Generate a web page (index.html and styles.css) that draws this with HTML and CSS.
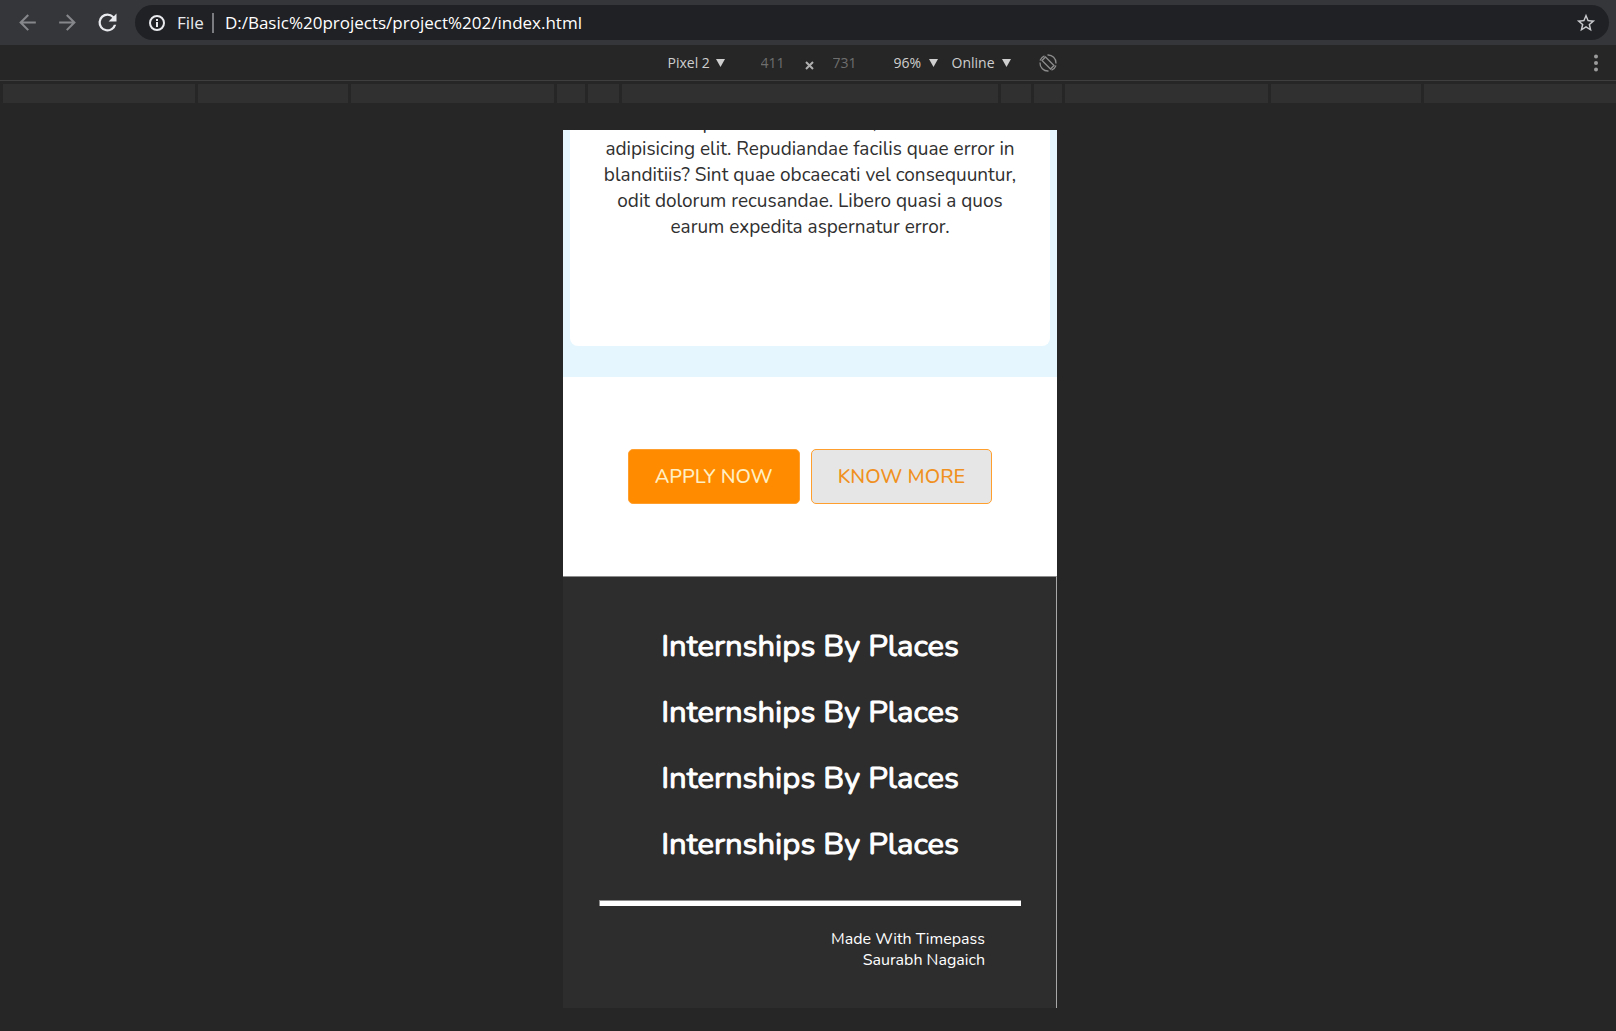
FILE: index.html
```html
<!DOCTYPE html>
<html lang="en">
<head>
<meta charset="utf-8">
<meta name="viewport" content="width=device-width, initial-scale=1">
<title>project 2</title>
<link rel="stylesheet" href="styles.css">
</head>
<body>
<header class="browser-bar">
  <nav class="nav-buttons" aria-label="Browser navigation">
    <button class="icon-button dim" type="button" aria-label="Back"><svg viewBox="0 0 24 24" width="25" height="25"><path fill="currentColor" d="M20 11H7.8l5.6-5.6L12 4l-8 8 8 8 1.4-1.4L7.8 13H20z"/></svg></button>
    <button class="icon-button dim" type="button" aria-label="Forward"><svg viewBox="0 0 24 24" width="25" height="25"><path fill="currentColor" d="M12 4l-1.4 1.4 5.6 5.6H4v2h12.200l-5.600 5.600L12 20l8-8z"/></svg></button>
    <button class="icon-button" type="button" aria-label="Reload"><svg viewBox="0 0 24 24" width="27" height="27"><path fill="currentColor" d="M17.650 6.350A7.960 7.960 0 0 0 12 4a8 8 0 1 0 7.730 10h-2.080A6 6 0 1 1 12 6c1.660 0 3.140.69 4.220 1.780L13 11h7V4z"/></svg></button>
  </nav>
  <div class="omnibox">
    <svg class="info" viewBox="0 0 18 18" width="18" height="18" aria-hidden="true"><circle cx="9" cy="9" r="7" fill="none" stroke="currentColor" stroke-width="2"/><path fill="currentColor" d="M8 8h2v5H8zM8 5h2v2H8z"/></svg>
    <span class="scheme">File</span>
    <input class="url" type="text" aria-label="Address" value="D:/Basic%20projects/project%202/index.html">
    <button class="icon-button star" type="button" aria-label="Bookmark"><svg viewBox="0 0 24 24" width="22" height="22"><path fill="currentColor" d="M22 9.240l-7.190-.62L12 2 9.190 8.630 2 9.240l5.460 4.730L5.820 21 12 17.270 18.180 21l-1.630-7.030zM12 15.400l-3.760 2.270 1-4.280-3.320-2.880 4.380-.38L12 6.100l1.710 4.040 4.380.38-3.320 2.880 1 4.280z"/></svg></button>
  </div>
</header>

<section class="device-bar" aria-label="Device toolbar">
  <div class="device-controls">
    <label class="picker picker-device"><select aria-label="Device"><option>Pixel 2</option></select><svg viewBox="0 0 9 8" width="9" height="8"><path fill="currentColor" d="M0 0h9L4.500 8z"/></svg></label>
    <div class="size">
      <input type="text" aria-label="Width" value="411">
      <svg viewBox="0 0 9 9" width="9" height="9" aria-hidden="true"><path d="M1 1l7 7M8 1L1 8" stroke="currentColor" stroke-width="2"/></svg>
      <input type="text" aria-label="Height" value="731">
    </div>
    <label class="picker picker-zoom"><select aria-label="Zoom"><option>96%</option></select><svg viewBox="0 0 9 8" width="9" height="8"><path fill="currentColor" d="M0 0h9L4.500 8z"/></svg></label>
    <label class="picker picker-network"><select aria-label="Network"><option>Online</option></select><svg viewBox="0 0 9 8" width="9" height="8"><path fill="currentColor" d="M0 0h9L4.500 8z"/></svg></label>
    <button class="icon-button rotate" type="button" aria-label="Rotate"><svg viewBox="0 0 18 18" width="18" height="18" fill="none" stroke="currentColor" stroke-width="1.300"><path d="M6.500 3L15 11.500 11.500 15 3 6.500z"/><path d="M8.500 1a8 8 0 0 1 8.500 8.500M9.500 17A8 8 0 0 1 1 8.500"/><path d="M1 6.500A8 8 0 0 1 5.500 1.800M17 11.500a8 8 0 0 1-4.500 4.700"/></svg></button>
  </div>
  <button class="icon-button more" type="button" aria-label="More options"><svg viewBox="0 0 4 18" width="4" height="18" fill="currentColor"><circle cx="2" cy="2.500" r="2"/><circle cx="2" cy="9" r="2"/><circle cx="2" cy="15.500" r="2"/></svg></button>
</section>

<div class="ruler" aria-hidden="true"><i></i><i></i><i></i><i></i><i></i><i></i><i></i><i></i><i></i><i></i><i></i></div>

<main class="viewport">
  <div class="device">
    <section class="about">
      <div class="card">
        <p>Lorem ipsum dolor sit amet, consectetur<br>adipisicing elit. Repudiandae facilis quae error in<br>blanditiis? Sint quae obcaecati vel consequuntur,<br>odit dolorum recusandae. Libero quasi a quos<br>earum expedita aspernatur error.</p>
      </div>
    </section>
    <section class="actions">
      <button class="action primary" type="button">APPLY NOW</button>
      <button class="action secondary" type="button">KNOW MORE</button>
    </section>
    <footer class="footer">
      <h2>Internships By Places</h2>
      <h2>Internships By Places</h2>
      <h2>Internships By Places</h2>
      <h2>Internships By Places</h2>
      <hr>
      <p class="credit">Made With Timepass<br>Saurabh Nagaich</p>
    </footer>
  </div>
</main>
</body>
</html>
```
FILE: styles.css
```css
* { box-sizing: border-box; }

body {
  margin: 0;
  min-height: 100vh;
  display: flex;
  flex-direction: column;
  background: #262626;
  color: #fff;
  font-family: "Segoe UI", "Open Sans", "Noto Sans", sans-serif;
}

button, input, select {
  font: inherit;
  color: inherit;
  border: 0;
  padding: 0;
  background: none;
}

svg { display: block; flex: none; }

.icon-button {
  display: grid;
  place-items: center;
  color: #e8eaed;
}

/* Browser toolbar */
.browser-bar {
  display: flex;
  align-items: center;
  gap: 14px;
  height: 45px;
  padding: 0 7px 0 14px;
  background: #35363a;
}

.nav-buttons { display: flex; gap: 13px; }
.nav-buttons .icon-button { width: 27px; height: 28px; }
.icon-button.dim { color: #86878a; }

.omnibox {
  flex: 1;
  display: flex;
  align-items: center;
  height: 35px;
  padding: 0 12px 0 13px;
  border-radius: 18px;
  background: #202124;
  font-size: 17px;
}

.info { color: #e8eaed; }

.scheme {
  margin-left: 11px;
  padding-right: 8px;
  border-right: 2px solid #7b7c7f;
  line-height: 20px;
  color: #e8eaed;
}

.url { flex: 1; min-width: 0; margin-left: 11px; }
.star svg { color: #c8cacd; }

/* Device toolbar */
.device-bar {
  display: flex;
  align-items: center;
  height: 36px;
  padding-right: 18px;
  border-bottom: 1px solid #3f3f3f;
  color: #cfcfcf;
  font-size: 14px;
}

.device-controls {
  display: flex;
  align-items: center;
  margin: 0 auto;
  padding-left: 130px;
}

.picker { display: flex; align-items: center; }
.picker select { appearance: none; }
.picker-device select { width: 48px; }
.picker-zoom select { width: 35px; }
.picker-network select { width: 50px; }
.picker-network { margin-left: 14px; }

.size {
  display: flex;
  align-items: center;
  gap: 19px;
  margin: 0 36px;
  color: #6e6e6e;
}
.size input { width: 25px; }
.size svg { color: #b0b0b0; margin-top: 5px; }

.rotate { margin-left: 28px; }
.rotate svg { color: #8c8c8c; }
.more svg { color: #9c9c9c; }

.ruler {
  display: grid;
  grid-template-columns: 192fr 151fr 203fr 28fr 31fr 377fr 30fr 28fr 203fr 151fr 192fr;
  gap: 3px;
  height: 19px;
  margin: 3px 0 0 3px;
}
.ruler i { background: #303030; }

/* Emulated page */
.viewport {
  flex: 1;
  display: flex;
  justify-content: center;
  align-items: flex-start;
  padding: 27px 0 23px 4px;
}

.device {
  width: 494px;
  max-width: 100%;
  background: #fff;
  color: #303030;
  font-family: Nunito, Lato, sans-serif;
}

/* Scrolled so that only the end of the card shows */
.about {
  display: flex;
  flex-direction: column;
  justify-content: flex-end;
  height: 247px;
  padding: 0 7px 31px;
  overflow: hidden;
  background: #e5f6ff;
}

.card {
  flex: none;
  padding: 0 20px 106px;
  border-radius: 8px;
  background: #fff;
}

.card p {
  margin: 0;
  font-size: 19px;
  line-height: 26px;
  text-align: center;
  white-space: nowrap;
}

.actions {
  display: flex;
  justify-content: center;
  gap: 11px;
  padding: 72px 0;
}

.action {
  height: 55px;
  padding: 0 26px;
  border: 1px solid #ff9f2e;
  border-radius: 5px;
  font-size: 20px;
  font-weight: 500;
}
.primary { background: #ff8c00; color: #ffefc4; }
.secondary { background: #e6e6e6; color: #f09020; }

.footer {
  padding: 36px 35px 37px 36px;
  border-top: 1px solid #8c8c8c;
  border-right: 1px solid #a8a8a8;
  background: #2d2d2d;
  color: #fff;
}

.footer h2 {
  margin: 0;
  font-size: 31px;
  font-weight: 400;
  line-height: 66px;
  text-align: center;
  -webkit-text-stroke: 1px currentColor;
}

.footer hr {
  height: 6px;
  margin: 23px 0;
  border: 1px solid #8c8c8c;
  border-width: 1px 0 0 1px;
  background: #fff;
}

.credit {
  margin: 0;
  padding-right: 36px;
  font-size: 16px;
  line-height: 21px;
  text-align: right;
}
```
